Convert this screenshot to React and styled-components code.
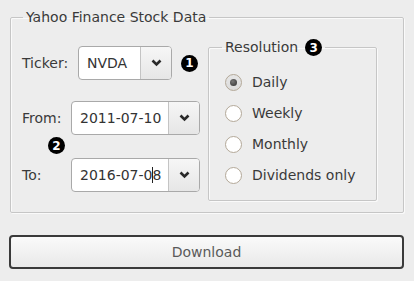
import React from 'react';
import styled, { createGlobalStyle } from 'styled-components';

const GlobalStyle = createGlobalStyle`
    html, body {
        margin: 0;
        padding: 0;
        background: #ededed;
    }
    body {
        font-family: "DejaVu Sans", "Liberation Sans", sans-serif;
        font-size: 14px;
        color: #3a3a3a;
    }
`

const Page = styled.div`
    width: 414px;
    height: 281px;
    padding: 10px 10px 0 10px;
    box-sizing: border-box;
    display: flex;
    flex-direction: column;
`

const Group = styled.fieldset`
    margin: ${({ $margin }) => $margin || '0'};
    padding: ${({ $padding }) => $padding || '0'};
    border: 1px solid #c6c6c6;
    border-radius: 2px;
    box-shadow: inset 1px 1px 0 #fafafa, 1px 1px 0 #fafafa;
    min-width: 0;
    width: ${({ $width }) => $width || 'auto'};
    box-sizing: border-box;
`

const Legend = styled.legend`
    padding: 0 3px;
    margin-left: ${({ $offset }) => $offset || '0'};
    line-height: 15px;
    color: #3a3a3a;
    display: flex;
    align-items: center;
`

const Body = styled.div`
    display: flex;
    align-items: flex-start;
`

const LeftColumn = styled.div`
    position: relative;
    display: flex;
    flex-direction: column;
    width: 186px;
`

const Row = styled.div`
    display: flex;
    align-items: center;
    margin-top: ${({ $top }) => $top || '0'};
`

const Label = styled.span`
    width: ${({ $width }) => $width || 'auto'};
    flex-shrink: 0;
`

const Combo = styled.div`
    display: flex;
    width: ${({ $width }) => $width};
    height: 34px;
    box-sizing: border-box;
    border: 1px solid #a9a9a9;
    border-radius: 4px;
    background: #fff;
    overflow: hidden;
`

const ComboText = styled.div`
    flex: 1;
    display: flex;
    align-items: center;
    padding-left: 8px;
    color: #333;
`

const ComboButton = styled.div`
    width: 30px;
    border-left: 1px solid #c4c4c4;
    background: linear-gradient(#f6f6f6, #e6e6e6);
    display: flex;
    align-items: center;
    justify-content: center;
`

const Caret = styled.span`
    display: inline-block;
    width: 1px;
    height: 16px;
    background: #222;
    margin-right: -1px;
`

const Badge = styled.span`
    display: inline-flex;
    align-items: center;
    justify-content: center;
    width: 17px;
    height: 17px;
    border-radius: 50%;
    background: #000;
    color: #fff;
    font-family: "DejaVu Sans", sans-serif;
    font-weight: bold;
    font-size: 12px;
    line-height: 1;
    margin-left: ${({ $gap }) => $gap || '0'};
`

const FloatingBadge = styled(Badge)`
    position: absolute;
    left: ${({ $left }) => $left};
    top: ${({ $top }) => $top};
`

const RadioList = styled.div`
    display: flex;
    flex-direction: column;
    gap: 13px;
`

const RadioRow = styled.label`
    display: flex;
    align-items: center;
    gap: 10px;
    height: 18px;
`

const RadioCircle = styled.span`
    width: 17px;
    height: 17px;
    box-sizing: border-box;
    border-radius: 50%;
    border: 1px solid #b3a898;
    background: ${({ $on }) => $on ? 'linear-gradient(#e6e6e6, #dcdcdc)' : '#fff'};
    display: flex;
    align-items: center;
    justify-content: center;
    &::after {
        content: '';
        display: ${({ $on }) => $on ? 'block' : 'none'};
        width: 7px;
        height: 7px;
        border-radius: 50%;
        background: radial-gradient(circle at 40% 35%, #777, #2e2e2e);
    }
`

const DownloadButton = styled.button`
    margin-top: 22px;
    margin-left: -1px;
    width: 395px;
    height: 34px;
    box-sizing: border-box;
    border: 2px solid #3a3a3a;
    border-radius: 4px;
    background: linear-gradient(#fafafa, #e9e9e9);
    font-family: "DejaVu Sans", "Liberation Sans", sans-serif;
    font-size: 14px;
    color: #5a5a5a;
`

function Chevron() {
    return (
        <svg width="11" height="8" viewBox="0 0 11 8">
            <path d="M1.5 1.5 L5.5 5.5 L9.5 1.5" fill="none" stroke="#2a2a2a" strokeWidth="2.6" />
        </svg>
    )
}

const resolutions = ['Daily', 'Weekly', 'Monthly', 'Dividends only'];

export default function App() {
    return (
        <Page>
            <GlobalStyle />
            <Group $padding="21px 0 11px 11px">
                <Legend $offset="1px">Yahoo Finance Stock Data</Legend>
                <Body>
                    <LeftColumn>
                        <Row>
                            <Label $width="56px">Ticker:</Label>
                            <Combo $width="94px">
                                <ComboText>NVDA</ComboText>
                                <ComboButton><Chevron /></ComboButton>
                            </Combo>
                            <Badge $gap="9px">1</Badge>
                        </Row>
                        <Row $top="21px">
                            <Label $width="49px">From:</Label>
                            <Combo $width="129px">
                                <ComboText>2011-07-10</ComboText>
                                <ComboButton><Chevron /></ComboButton>
                            </Combo>
                        </Row>
                        <FloatingBadge $left="26px" $top="91px">2</FloatingBadge>
                        <Row $top="23px">
                            <Label $width="49px">To:</Label>
                            <Combo $width="129px">
                                <ComboText>2016-07-0<Caret />8</ComboText>
                                <ComboButton><Chevron /></ComboButton>
                            </Combo>
                        </Row>
                    </LeftColumn>
                    <Group $width="169px" $margin="-7px 0 0 0" $padding="17px 0 16px 16px">
                        <Legend $offset="-3px">Resolution<Badge $gap="7px">3</Badge></Legend>
                        <RadioList>
                            {resolutions.map((r, i) => (
                                <RadioRow key={r}>
                                    <RadioCircle $on={i === 0} />
                                    {r}
                                </RadioRow>
                            ))}
                        </RadioList>
                    </Group>
                </Body>
            </Group>
            <DownloadButton>Download</DownloadButton>
        </Page>
    )
}
